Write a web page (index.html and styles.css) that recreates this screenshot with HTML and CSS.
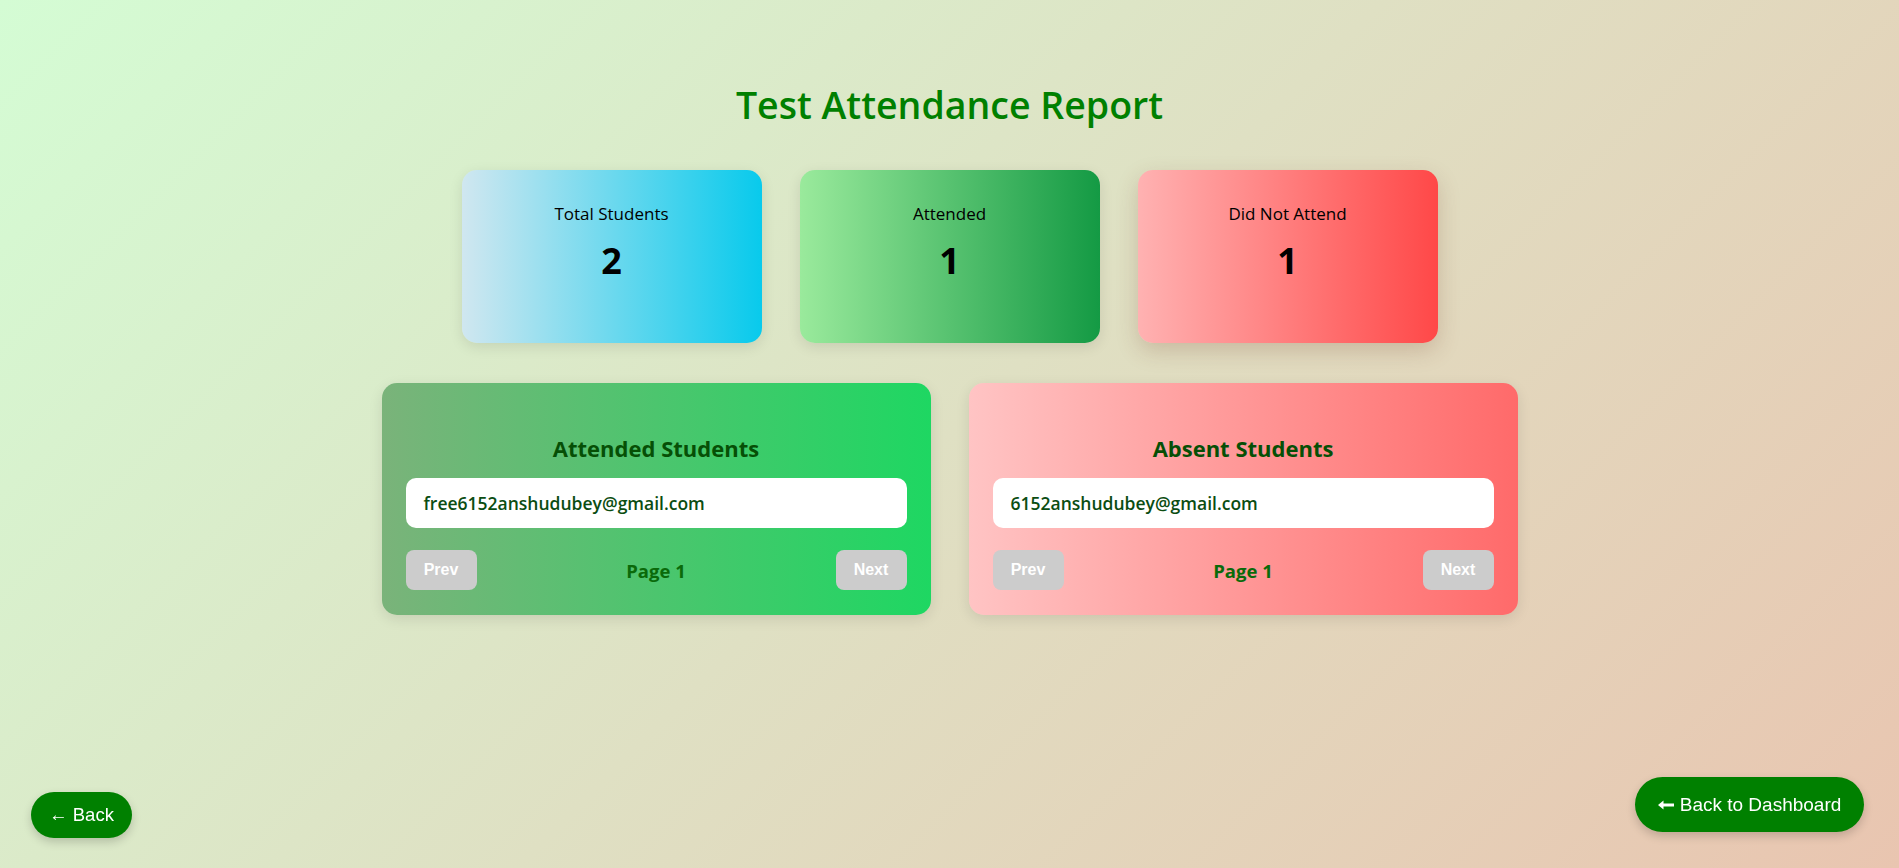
FILE: index.html
```html
<!DOCTYPE html>
<html lang="en">
<head>
<meta charset="utf-8">
<title>Test Attendance Report</title>
<link rel="stylesheet" href="styles.css">
</head>
<body>
<main class="page">
  <h1 class="title">Test Attendance Report</h1>

  <section class="stats">
    <div class="stat stat-total">
      <p class="stat-label">Total Students</p>
      <p class="stat-value">2</p>
    </div>
    <div class="stat stat-attended">
      <p class="stat-label">Attended</p>
      <p class="stat-value">1</p>
    </div>
    <div class="stat stat-absent">
      <p class="stat-label">Did Not Attend</p>
      <p class="stat-value">1</p>
    </div>
  </section>

  <section class="lists">
    <div class="panel panel-attended">
      <h3 class="panel-title">Attended Students</h3>
      <ul class="emails">
        <li class="email">free6152anshudubey@gmail.com</li>
      </ul>
      <div class="pager">
        <button class="pager-btn" disabled>Prev</button>
        <span class="pager-page">Page 1</span>
        <button class="pager-btn" disabled>Next</button>
      </div>
    </div>
    <div class="panel panel-absent">
      <h3 class="panel-title">Absent Students</h3>
      <ul class="emails">
        <li class="email">6152anshudubey@gmail.com</li>
      </ul>
      <div class="pager">
        <button class="pager-btn" disabled>Prev</button>
        <span class="pager-page">Page 1</span>
        <button class="pager-btn" disabled>Next</button>
      </div>
    </div>
  </section>
</main>

<button class="back-btn">&larr; Back</button>
<button class="dash-btn"><svg class="dash-arrow" width="16" height="10" viewBox="0 0 16 10"><path d="M0 5 L5.5 0.5 V3.6 H16 V6.4 H5.5 V9.5 Z" fill="#fff"/></svg>Back to Dashboard</button>
</body>
</html>
```

FILE: styles.css
```css
* { box-sizing: border-box; }

html, body {
  margin: 0;
  padding: 0;
  height: 100%;
}

body {
  font-family: "Open Sans", "Noto Sans", sans-serif;
  background: linear-gradient(135deg, #d4fcd4 0%, #dfe0c3 50%, #e9c5b0 100%);
  min-height: 100vh;
  overflow: hidden;
}

.page {
  display: flex;
  flex-direction: column;
  align-items: center;
  padding-top: 81px;
}

.title {
  margin: 0 0 41px;
  font-size: 37.5px;
  line-height: 48px;
  font-weight: 600;
  color: #008000;
}

.stats {
  display: flex;
  gap: 38px;
}

.stat {
  width: 300px;
  height: 173px;
  border-radius: 15px;
  padding-top: 32px;
  text-align: center;
  color: #000;
  box-shadow: 0 4px 14px rgba(0, 0, 0, 0.10);
}

.stat-total { background: linear-gradient(to right, #d0e7f0, #08caec); }
.stat-attended { background: linear-gradient(to right, #9aea9c, #149a44); }
.stat-absent {
  background: linear-gradient(to right, #ffb2b2, #ff4848);
  box-shadow: 0 8px 22px rgba(120, 60, 40, 0.22);
}

.stat-label {
  margin: 0;
  font-size: 17px;
  line-height: 24px;
}

.stat-value {
  margin: 13px 0 0;
  font-size: 36px;
  line-height: 43px;
  font-weight: 700;
}

.lists {
  display: flex;
  gap: 38px;
  margin-top: 40px;
}

.panel {
  width: 549px;
  padding: 24px 24px 25px;
  border-radius: 15px;
  box-shadow: 0 4px 14px rgba(0, 0, 0, 0.10);
}

.panel-attended { background: linear-gradient(to right, #7ab37a, #1ed762); }
.panel-absent { background: linear-gradient(to right, #ffc4c4, #ff6a6a); }

.panel-title {
  margin: 27px 0 16px;
  text-align: center;
  font-size: 22px;
  line-height: 28px;
  font-weight: 700;
  color: #064f06;
}

.emails {
  list-style: none;
  margin: 0;
  padding: 0;
}

.email {
  height: 50px;
  display: flex;
  align-items: center;
  padding: 0 18px;
  background: #fff;
  border-radius: 10px;
  font-size: 17.5px;
  font-weight: 600;
  color: #0b4d12;
}

.pager {
  display: flex;
  justify-content: space-between;
  align-items: center;
  margin-top: 22px;
}

.pager-btn {
  width: 71px;
  height: 40px;
  border: none;
  border-radius: 8px;
  background: #cccccc;
  color: #fff;
  font-family: "Liberation Sans", Arial, sans-serif;
  font-size: 16px;
  font-weight: 700;
  padding: 0;
}

.pager-page {
  font-size: 18.5px;
  line-height: 24px;
  padding-top: 2px;
  font-weight: 700;
  color: #0a6a0a;
}

.back-btn,
.dash-btn {
  position: fixed;
  border: none;
  background: #008000;
  color: #fff;
  font-family: "Liberation Sans", Arial, sans-serif;
  border-radius: 999px;
  box-shadow: 0 4px 10px rgba(0, 0, 0, 0.18);
  display: flex;
  align-items: center;
  justify-content: center;
}

.back-btn {
  left: 31px;
  bottom: 30px;
  width: 101px;
  height: 46px;
  font-size: 18.5px;
  padding: 0;
}

.dash-btn {
  right: 35px;
  bottom: 36px;
  width: 229px;
  height: 55px;
  font-size: 19px;
  padding: 0;
  gap: 6px;
}

.dash-arrow { display: block; }
```
